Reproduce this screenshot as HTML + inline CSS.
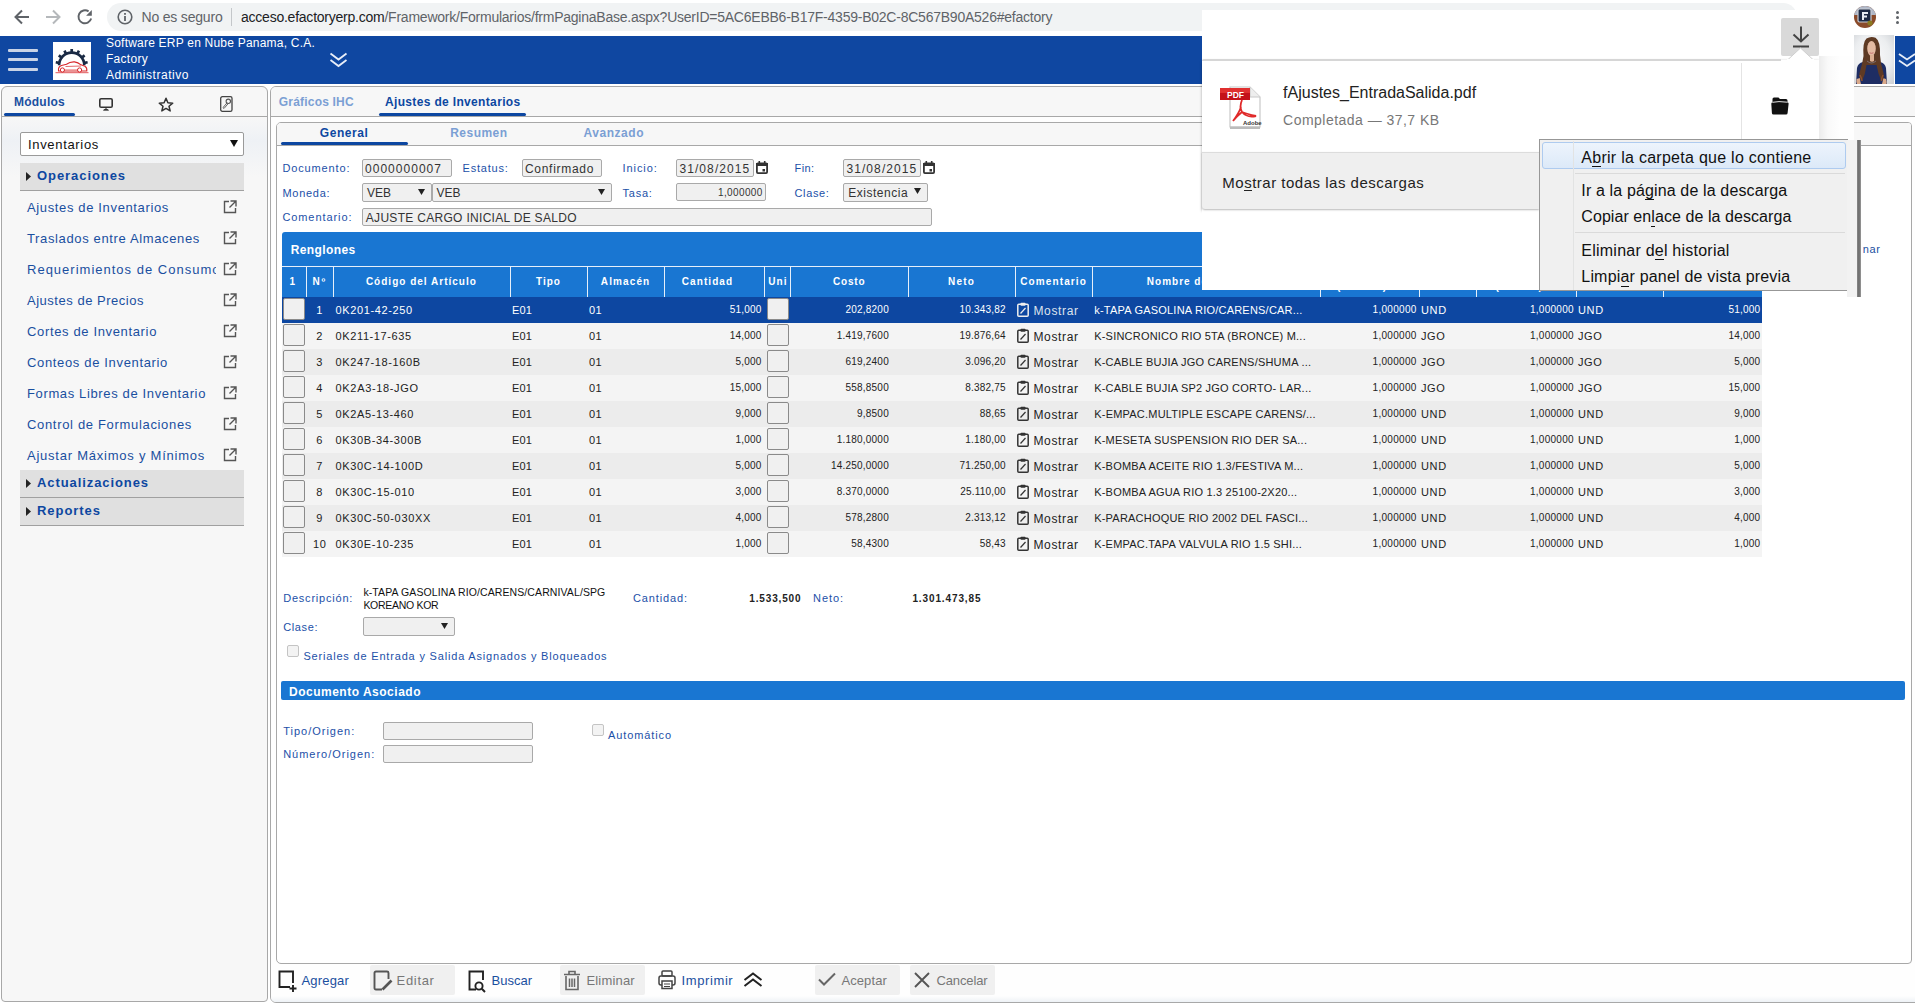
<!DOCTYPE html><html><head><meta charset="utf-8"><style>
html,body{margin:0;padding:0;width:1915px;height:1005px;overflow:hidden;background:#fff;font-family:"Liberation Sans",sans-serif;}
.t{position:absolute;white-space:nowrap;line-height:1;}
div{box-sizing:border-box;}
svg{position:absolute;overflow:visible;}
</style></head><body>
<div style="position:absolute;left:0px;top:0px;width:1915px;height:36px;background:#fff;"></div>
<div style="position:absolute;left:107px;top:3px;width:1690px;height:28px;background:#f1f3f4;border-radius:14px;"></div>
<svg style="left:12.5px;top:8px" width="18" height="18" viewBox="0 0 18 18"><path d="M16 9H3M9 2.5L2.5 9 9 15.5" fill="none" stroke="#5f6368" stroke-width="2"/></svg>
<svg style="left:44px;top:8px" width="18" height="18" viewBox="0 0 18 18"><path d="M2 9H15M9 2.5L15.5 9 9 15.5" fill="none" stroke="#b5b8bb" stroke-width="2"/></svg>
<svg style="left:76px;top:8px" width="18" height="18" viewBox="0 0 18 18"><path d="M15.2 10.6A6.5 6.5 0 1 1 12.6 3.4" fill="none" stroke="#5f6368" stroke-width="1.9"/><path d="M15.8 2.1V7.8H10.1Z" fill="#5f6368"/></svg>
<svg style="left:117px;top:8.5px" width="16" height="16" viewBox="0 0 16 16"><circle cx="8" cy="8" r="6.8" fill="none" stroke="#5f6368" stroke-width="1.6"/><rect x="7.1" y="7" width="1.8" height="5" fill="#5f6368"/><rect x="7.1" y="4" width="1.8" height="1.8" fill="#5f6368"/></svg>
<div class="t" style="left:141.50px;top:10.15px;font-size:14px;color:#5f6368;letter-spacing:-0.189px;">No es seguro</div>
<div style="position:absolute;left:231px;top:8px;width:1px;height:18px;background:#c4c7ca;"></div>
<div class="t" style="left:241px;top:10.15px;font-size:14px;color:#202124;letter-spacing:-0.235px;"><span style="color:#202124">acceso.efactoryerp.com</span><span style="color:#5f6368">/Framework/Formularios/frmPaginaBase.aspx?UserID=5AC6EBB6-B17F-4359-B02C-8C567B90A526#efactory</span></div>
<div style="position:absolute;left:0px;top:36px;width:1915px;height:48px;background:#0f47a1;"></div>
<div style="position:absolute;left:8px;top:49px;width:30px;height:3px;background:#c9d3e6;border-radius:1px;"></div>
<div style="position:absolute;left:8px;top:58px;width:30px;height:3px;background:#c9d3e6;border-radius:1px;"></div>
<div style="position:absolute;left:8px;top:68px;width:30px;height:3px;background:#c9d3e6;border-radius:1px;"></div>
<div style="position:absolute;left:53px;top:42px;width:38px;height:38px;background:#fff;"></div>
<svg style="left:53px;top:42px" width="38" height="38" viewBox="0 0 38 38">
<path d="M6.1 23.2 A12.6 12.6 0 0 1 31.299999999999997 23.2" fill="none" stroke="#1a2a44" stroke-width="2.6"/>
<g fill="#1a2a44"><rect x="17.35" y="7.00" width="2.7" height="4.5" transform="rotate(79.5 18.7 23.2)"/><rect x="17.35" y="7.00" width="2.7" height="4.5" transform="rotate(53.0 18.7 23.2)"/><rect x="17.35" y="7.00" width="2.7" height="4.5" transform="rotate(26.5 18.7 23.2)"/><rect x="17.35" y="7.00" width="2.7" height="4.5" transform="rotate(-0.0 18.7 23.2)"/><rect x="17.35" y="7.00" width="2.7" height="4.5" transform="rotate(-26.5 18.7 23.2)"/><rect x="17.35" y="7.00" width="2.7" height="4.5" transform="rotate(-53.0 18.7 23.2)"/><rect x="17.35" y="7.00" width="2.7" height="4.5" transform="rotate(-79.5 18.7 23.2)"/></g>
<path d="M5.5 29 Q5 24.5 8.5 23.5 L13.5 22.3 Q17 19.6 21.5 19.9 Q25 20.3 28 22.8 L32 24.2 Q34.2 25.5 33.8 29 Z" fill="#fff" stroke="#d8262a" stroke-width="1.1"/>
<path d="M12.5 24.5 L28 24" stroke="#d8262a" stroke-width="0.7"/>
<path d="M11 27.8 H25" stroke="#e88" stroke-width="0.9"/>
<circle cx="9.4" cy="28" r="2.1" fill="#fff" stroke="#d8262a" stroke-width="1"/><circle cx="26.6" cy="28" r="2.1" fill="#fff" stroke="#d8262a" stroke-width="1"/>
<path d="M2.5 30.7 H35.5" stroke="#d8262a" stroke-width="0.9" opacity="0.85"/>
</svg>
<div class="t" style="left:106.00px;top:37.34px;font-size:12px;color:#fff;letter-spacing:0.215px;">Software ERP en Nube Panama, C.A.</div>
<div class="t" style="left:106.00px;top:53.34px;font-size:12px;color:#fff;letter-spacing:0.284px;">Factory</div>
<div class="t" style="left:106.00px;top:69.34px;font-size:12px;color:#fff;letter-spacing:0.546px;">Administrativo</div>
<svg style="left:329px;top:52px" width="19" height="16" viewBox="0 0 19 16"><path d="M1.5 1.5L9.5 7.5 17.5 1.5M1.5 8L9.5 14 17.5 8" fill="none" stroke="#e8eef8" stroke-width="1.8"/></svg>
<div style="position:absolute;left:1px;top:86px;width:267px;height:916px;background:#f7f7f7;border:1px solid #a8a8a8;border-radius:6px 6px 4px 4px;"></div>
<div style="position:absolute;left:2px;top:117px;width:265px;height:60px;background:linear-gradient(#f7f7f7,#eef1f5 40%,#f7f7f7);"></div>
<div style="position:absolute;left:2px;top:116px;width:265px;height:1px;background:#a8a8a8;"></div>
<div class="t" style="left:14.00px;top:95.84px;font-size:12px;color:#1a4fa0;font-weight:bold;letter-spacing:0.239px;">Módulos</div>
<div style="position:absolute;left:4px;top:113px;width:71px;height:3px;background:#0d47a1;border-radius:2px;"></div>
<svg style="left:99px;top:97.5px" width="14" height="13" viewBox="0 0 14 13"><rect x="0.8" y="0.8" width="12.4" height="8.4" rx="1.3" fill="none" stroke="#333" stroke-width="1.6"/><path d="M4.5 12.2H9.5L7 10.6Z" fill="#333" stroke="#333" stroke-width="0.8"/></svg>
<svg style="left:158px;top:96.5px" width="16" height="15" viewBox="0 0 24 23"><path d="M12 2L14.9 8.9 22.3 9.4 16.6 14.2 18.4 21.4 12 17.5 5.6 21.4 7.4 14.2 1.7 9.4 9.1 8.9Z" fill="none" stroke="#333" stroke-width="2.3" stroke-linejoin="round"/></svg>
<svg style="left:220px;top:96px" width="13" height="16" viewBox="0 0 13 16"><rect x="0.7" y="0.7" width="11.3" height="14.6" rx="1.6" fill="none" stroke="#444" stroke-width="1.3"/><circle cx="8.3" cy="5.3" r="2.2" fill="none" stroke="#555" stroke-width="1.1"/><path d="M7 6.8L3 11.6 4 12.5 8 7.8" fill="none" stroke="#555" stroke-width="0.9"/></svg>
<div style="position:absolute;left:20px;top:132px;width:224px;height:24px;background:#fff;border:1px solid #9a9a9a;border-radius:2px;"></div>
<div class="t" style="left:28.00px;top:138.00px;font-size:13px;color:#111;letter-spacing:0.673px;">Inventarios</div>
<svg style="left:230px;top:140px" width="8" height="7" viewBox="0 0 8 7"><path d="M0 0H8L4 7Z" fill="#111"/></svg>
<div style="position:absolute;left:20px;top:163px;width:224px;height:28px;background:#e0e0e0;border-bottom:1px solid #a0a0a0;"></div>
<svg style="left:26px;top:172px" width="5" height="9" viewBox="0 0 5 9"><path d="M0 0L5 4.5 0 9Z" fill="#222"/></svg>
<div class="t" style="left:37.00px;top:169.00px;font-size:13px;color:#0d47a1;font-weight:bold;letter-spacing:0.931px;">Operaciones</div>
<div class="t" style="left:27.00px;top:201.00px;font-size:13px;color:#1a4fa0;letter-spacing:0.641px;">Ajustes de Inventarios</div>
<svg style="left:223px;top:200px" width="14" height="14" viewBox="0 0 14 14"><path d="M6 1.5H1.5V12.5H12.5V8" fill="none" stroke="#555" stroke-width="1.4"/><path d="M7.5 1H13V6.5M13 1L6.5 7.5" fill="none" stroke="#555" stroke-width="1.4"/></svg>
<div class="t" style="left:27.00px;top:232.00px;font-size:13px;color:#1a4fa0;letter-spacing:0.638px;">Traslados entre Almacenes</div>
<svg style="left:223px;top:231px" width="14" height="14" viewBox="0 0 14 14"><path d="M6 1.5H1.5V12.5H12.5V8" fill="none" stroke="#555" stroke-width="1.4"/><path d="M7.5 1H13V6.5M13 1L6.5 7.5" fill="none" stroke="#555" stroke-width="1.4"/></svg>
<div style="position:absolute;left:27px;top:260px;width:189px;height:18px;overflow:hidden;">
<div class="t" style="left:0.00px;top:3.00px;font-size:13px;color:#1a4fa0;letter-spacing:1.005px;">Requerimientos de Consumos</div>
</div>
<svg style="left:223px;top:262px" width="14" height="14" viewBox="0 0 14 14"><path d="M6 1.5H1.5V12.5H12.5V8" fill="none" stroke="#555" stroke-width="1.4"/><path d="M7.5 1H13V6.5M13 1L6.5 7.5" fill="none" stroke="#555" stroke-width="1.4"/></svg>
<div class="t" style="left:27.00px;top:294.00px;font-size:13px;color:#1a4fa0;letter-spacing:0.519px;">Ajustes de Precios</div>
<svg style="left:223px;top:293px" width="14" height="14" viewBox="0 0 14 14"><path d="M6 1.5H1.5V12.5H12.5V8" fill="none" stroke="#555" stroke-width="1.4"/><path d="M7.5 1H13V6.5M13 1L6.5 7.5" fill="none" stroke="#555" stroke-width="1.4"/></svg>
<div class="t" style="left:27.00px;top:325.00px;font-size:13px;color:#1a4fa0;letter-spacing:0.647px;">Cortes de Inventario</div>
<svg style="left:223px;top:324px" width="14" height="14" viewBox="0 0 14 14"><path d="M6 1.5H1.5V12.5H12.5V8" fill="none" stroke="#555" stroke-width="1.4"/><path d="M7.5 1H13V6.5M13 1L6.5 7.5" fill="none" stroke="#555" stroke-width="1.4"/></svg>
<div class="t" style="left:27.00px;top:356.00px;font-size:13px;color:#1a4fa0;letter-spacing:0.657px;">Conteos de Inventario</div>
<svg style="left:223px;top:355px" width="14" height="14" viewBox="0 0 14 14"><path d="M6 1.5H1.5V12.5H12.5V8" fill="none" stroke="#555" stroke-width="1.4"/><path d="M7.5 1H13V6.5M13 1L6.5 7.5" fill="none" stroke="#555" stroke-width="1.4"/></svg>
<div class="t" style="left:27.00px;top:387.00px;font-size:13px;color:#1a4fa0;letter-spacing:0.635px;">Formas Libres de Inventario</div>
<svg style="left:223px;top:386px" width="14" height="14" viewBox="0 0 14 14"><path d="M6 1.5H1.5V12.5H12.5V8" fill="none" stroke="#555" stroke-width="1.4"/><path d="M7.5 1H13V6.5M13 1L6.5 7.5" fill="none" stroke="#555" stroke-width="1.4"/></svg>
<div class="t" style="left:27.00px;top:418.00px;font-size:13px;color:#1a4fa0;letter-spacing:0.673px;">Control de Formulaciones</div>
<svg style="left:223px;top:417px" width="14" height="14" viewBox="0 0 14 14"><path d="M6 1.5H1.5V12.5H12.5V8" fill="none" stroke="#555" stroke-width="1.4"/><path d="M7.5 1H13V6.5M13 1L6.5 7.5" fill="none" stroke="#555" stroke-width="1.4"/></svg>
<div class="t" style="left:27.00px;top:449.00px;font-size:13px;color:#1a4fa0;letter-spacing:0.763px;">Ajustar Máximos y Mínimos</div>
<svg style="left:223px;top:448px" width="14" height="14" viewBox="0 0 14 14"><path d="M6 1.5H1.5V12.5H12.5V8" fill="none" stroke="#555" stroke-width="1.4"/><path d="M7.5 1H13V6.5M13 1L6.5 7.5" fill="none" stroke="#555" stroke-width="1.4"/></svg>
<div style="position:absolute;left:20px;top:470px;width:224px;height:28px;background:#e0e0e0;border-bottom:1px solid #a0a0a0;"></div>
<svg style="left:26px;top:479px" width="5" height="9" viewBox="0 0 5 9"><path d="M0 0L5 4.5 0 9Z" fill="#222"/></svg>
<div class="t" style="left:37.00px;top:476.00px;font-size:13px;color:#0d47a1;font-weight:bold;letter-spacing:0.916px;">Actualizaciones</div>
<div style="position:absolute;left:20px;top:498px;width:224px;height:28px;background:#e0e0e0;border-bottom:1px solid #a0a0a0;"></div>
<svg style="left:26px;top:507px" width="5" height="9" viewBox="0 0 5 9"><path d="M0 0L5 4.5 0 9Z" fill="#222"/></svg>
<div class="t" style="left:37.00px;top:504.00px;font-size:13px;color:#0d47a1;font-weight:bold;letter-spacing:0.956px;">Reportes</div>
<div style="position:absolute;left:270px;top:86px;width:1660px;height:917px;background:#fefefe;border:1px solid #a8a8a8;border-radius:6px;"></div>
<div style="position:absolute;left:271px;top:87px;width:1660px;height:29px;background:#f7f7f7;border-radius:5px 0 0 0;"></div>
<div style="position:absolute;left:271px;top:116px;width:1660px;height:1px;background:#a8a8a8;"></div>
<div class="t" style="left:278.80px;top:95.84px;font-size:12px;color:#7b9fd4;font-weight:bold;letter-spacing:0.193px;">Gráficos IHC</div>
<div class="t" style="left:385.00px;top:95.84px;font-size:12px;color:#0d47a1;font-weight:bold;letter-spacing:0.339px;">Ajustes de Inventarios</div>
<div style="position:absolute;left:379px;top:113px;width:147px;height:3px;background:#0d47a1;border-radius:2px;"></div>
<div style="position:absolute;left:276px;top:122px;width:1636px;height:842px;background:#fff;border:1px solid #a8a8a8;border-radius:5px 4px 4px 5px;"></div>
<div style="position:absolute;left:277px;top:123px;width:1634px;height:22px;background:#f7f7f7;border-radius:4px 3px 0 0;"></div>
<div style="position:absolute;left:277px;top:145px;width:1634px;height:1px;background:#a8a8a8;"></div>
<div class="t" style="left:319.80px;top:127.14px;font-size:12px;color:#0d47a1;font-weight:bold;letter-spacing:0.544px;">General</div>
<div style="position:absolute;left:281px;top:142px;width:127px;height:3px;background:#0d47a1;border-radius:2px;"></div>
<div class="t" style="left:450.20px;top:127.14px;font-size:12px;color:#7b9fd4;font-weight:bold;letter-spacing:0.483px;">Resumen</div>
<div class="t" style="left:583.60px;top:127.14px;font-size:12px;color:#7b9fd4;font-weight:bold;letter-spacing:0.521px;">Avanzado</div>
<div class="t" style="left:282.40px;top:162.69px;font-size:11px;color:#1c50a8;letter-spacing:0.869px;">Documento:</div>
<div style="position:absolute;left:362px;top:159px;width:90px;height:18px;background:#f0f0f0;border:1px solid #a9a9a9;border-radius:2px;"></div>
<div class="t" style="left:365.00px;top:162.84px;font-size:12px;color:#333;letter-spacing:1.026px;">0000000007</div>
<div class="t" style="left:462.60px;top:162.69px;font-size:11px;color:#1c50a8;letter-spacing:0.782px;">Estatus:</div>
<div style="position:absolute;left:522px;top:159px;width:80px;height:18px;background:#f0f0f0;border:1px solid #a9a9a9;border-radius:2px;"></div>
<div class="t" style="left:525.00px;top:162.84px;font-size:12px;color:#333;letter-spacing:0.697px;">Confirmado</div>
<div class="t" style="left:622.60px;top:162.69px;font-size:11px;color:#1c50a8;letter-spacing:0.895px;">Inicio:</div>
<div style="position:absolute;left:676px;top:159px;width:78px;height:18px;background:#f0f0f0;border:1px solid #a9a9a9;border-radius:2px;"></div>
<div class="t" style="left:679.40px;top:162.84px;font-size:12px;color:#333;letter-spacing:1.094px;">31/08/2015</div>
<svg style="left:756px;top:161px" width="12" height="13" viewBox="0 0 12 13"><rect x="0.9" y="2.4" width="10.2" height="9.7" rx="1" fill="none" stroke="#333" stroke-width="1.8"/><rect x="0" y="2" width="12" height="3" fill="#333"/><rect x="2.5" y="0" width="1.6" height="3" fill="#333"/><rect x="7.9" y="0" width="1.6" height="3" fill="#333"/><rect x="6.5" y="8" width="2.5" height="2.5" fill="#333"/></svg>
<div class="t" style="left:794.50px;top:162.69px;font-size:11px;color:#1c50a8;letter-spacing:0.416px;">Fin:</div>
<div style="position:absolute;left:843px;top:159px;width:78px;height:18px;background:#f0f0f0;border:1px solid #a9a9a9;border-radius:2px;"></div>
<div class="t" style="left:846.40px;top:162.84px;font-size:12px;color:#333;letter-spacing:1.094px;">31/08/2015</div>
<svg style="left:923px;top:161px" width="12" height="13" viewBox="0 0 12 13"><rect x="0.9" y="2.4" width="10.2" height="9.7" rx="1" fill="none" stroke="#333" stroke-width="1.8"/><rect x="0" y="2" width="12" height="3" fill="#333"/><rect x="2.5" y="0" width="1.6" height="3" fill="#333"/><rect x="7.9" y="0" width="1.6" height="3" fill="#333"/><rect x="6.5" y="8" width="2.5" height="2.5" fill="#333"/></svg>
<div class="t" style="left:282.40px;top:187.69px;font-size:11px;color:#1c50a8;letter-spacing:0.742px;">Moneda:</div>
<div style="position:absolute;left:362px;top:183px;width:70px;height:19px;background:#f0f0f0;border:1px solid #a9a9a9;border-radius:2px;"></div>
<div class="t" style="left:366.90px;top:187.34px;font-size:12px;color:#333;letter-spacing:-0.004px;">VEB</div>
<svg style="left:417.5px;top:188.5px" width="7" height="6" viewBox="0 0 7 6"><path d="M0 0H7L3.5 6Z" fill="#222"/></svg>
<div style="position:absolute;left:432px;top:183px;width:180px;height:19px;background:#f0f0f0;border:1px solid #a9a9a9;border-radius:2px;"></div>
<div class="t" style="left:436.50px;top:187.34px;font-size:12px;color:#333;letter-spacing:-0.004px;">VEB</div>
<svg style="left:597.5px;top:188.5px" width="7" height="6" viewBox="0 0 7 6"><path d="M0 0H7L3.5 6Z" fill="#222"/></svg>
<div class="t" style="left:622.60px;top:187.69px;font-size:11px;color:#1c50a8;letter-spacing:0.742px;">Tasa:</div>
<div style="position:absolute;left:676px;top:183px;width:90px;height:18px;background:#f0f0f0;border:1px solid #a9a9a9;border-radius:2px;"></div>
<div class="t" style="right:1152.34px;top:188.03px;font-size:10px;color:#333;letter-spacing:0.361px;">1,000000</div>
<div class="t" style="left:794.50px;top:187.69px;font-size:11px;color:#1c50a8;letter-spacing:0.637px;">Clase:</div>
<div style="position:absolute;left:843px;top:183px;width:85px;height:19px;background:#f0f0f0;border:1px solid #a9a9a9;border-radius:2px;"></div>
<div class="t" style="left:848.20px;top:187.34px;font-size:12px;color:#333;letter-spacing:0.531px;">Existencia</div>
<svg style="left:913.5px;top:187.5px" width="7" height="6" viewBox="0 0 7 6"><path d="M0 0H7L3.5 6Z" fill="#222"/></svg>
<div class="t" style="left:282.40px;top:211.69px;font-size:11px;color:#1c50a8;letter-spacing:0.917px;">Comentario:</div>
<div style="position:absolute;left:362px;top:208px;width:570px;height:18px;background:#f0f0f0;border:1px solid #a9a9a9;border-radius:2px;"></div>
<div class="t" style="left:365.80px;top:211.84px;font-size:12px;color:#333;letter-spacing:0.301px;">AJUSTE CARGO INICIAL DE SALDO</div>
<div style="position:absolute;left:282px;top:232px;width:1480px;height:34px;background:#1976d2;border-radius:3px 3px 0 0;"></div>
<div class="t" style="left:290.70px;top:243.84px;font-size:12px;color:#fff;font-weight:bold;letter-spacing:0.406px;">Renglones</div>
<div style="position:absolute;left:282px;top:266px;width:1480px;height:31px;background:#1976d2;border-top:1px solid #e6effa;"></div>
<div style="position:absolute;left:306px;top:267px;width:1px;height:30px;background:#e6effa;"></div>
<div style="position:absolute;left:333px;top:267px;width:1px;height:30px;background:#e6effa;"></div>
<div style="position:absolute;left:510px;top:267px;width:1px;height:30px;background:#e6effa;"></div>
<div style="position:absolute;left:587px;top:267px;width:1px;height:30px;background:#e6effa;"></div>
<div style="position:absolute;left:664px;top:267px;width:1px;height:30px;background:#e6effa;"></div>
<div style="position:absolute;left:764px;top:267px;width:1px;height:30px;background:#e6effa;"></div>
<div style="position:absolute;left:790px;top:267px;width:1px;height:30px;background:#e6effa;"></div>
<div style="position:absolute;left:908px;top:267px;width:1px;height:30px;background:#e6effa;"></div>
<div style="position:absolute;left:1015px;top:267px;width:1px;height:30px;background:#e6effa;"></div>
<div style="position:absolute;left:1092px;top:267px;width:1px;height:30px;background:#e6effa;"></div>
<div style="position:absolute;left:1320px;top:267px;width:1px;height:30px;background:#e6effa;"></div>
<div style="position:absolute;left:1419px;top:267px;width:1px;height:30px;background:#e6effa;"></div>
<div style="position:absolute;left:1476px;top:267px;width:1px;height:30px;background:#e6effa;"></div>
<div style="position:absolute;left:1576px;top:267px;width:1px;height:30px;background:#e6effa;"></div>
<div style="position:absolute;left:1663px;top:267px;width:1px;height:30px;background:#e6effa;"></div>
<div class="t" style="left:1337.00px;top:281.74px;font-size:10px;color:#fff;font-weight:bold;letter-spacing:-0.044px;">(Cantidad)</div>
<div class="t" style="left:1495.50px;top:281.74px;font-size:10px;color:#fff;font-weight:bold;letter-spacing:-0.344px;">(Cantidad)</div>
<div class="t" style="left:289.60px;top:276.54px;font-size:10px;color:#fff;font-weight:bold;letter-spacing:1.112px;">1</div>
<div class="t" style="left:312.60px;top:276.54px;font-size:10px;color:#fff;font-weight:bold;letter-spacing:1.563px;">Nº</div>
<div class="t" style="left:365.90px;top:276.54px;font-size:10px;color:#fff;font-weight:bold;letter-spacing:1.008px;">Código del Artículo</div>
<div class="t" style="left:536.00px;top:276.54px;font-size:10px;color:#fff;font-weight:bold;letter-spacing:1.019px;">Tipo</div>
<div class="t" style="left:600.80px;top:276.54px;font-size:10px;color:#fff;font-weight:bold;letter-spacing:1.116px;">Almacén</div>
<div class="t" style="left:681.80px;top:276.54px;font-size:10px;color:#fff;font-weight:bold;letter-spacing:1.078px;">Cantidad</div>
<div class="t" style="left:768.20px;top:276.54px;font-size:10px;color:#fff;font-weight:bold;letter-spacing:1.164px;">Uni</div>
<div class="t" style="left:833.00px;top:276.54px;font-size:10px;color:#fff;font-weight:bold;letter-spacing:0.794px;">Costo</div>
<div class="t" style="left:948.00px;top:276.54px;font-size:10px;color:#fff;font-weight:bold;letter-spacing:1.194px;">Neto</div>
<div class="t" style="left:1020.20px;top:276.54px;font-size:10px;color:#fff;font-weight:bold;letter-spacing:1.124px;">Comentario</div>
<div class="t" style="left:1146.80px;top:276.54px;font-size:10px;color:#fff;font-weight:bold;letter-spacing:1.002px;">Nombre del Artículo</div>
<div class="t" style="left:1430.00px;top:276.54px;font-size:10px;color:#fff;font-weight:bold;letter-spacing:1.130px;">Unidad</div>
<div class="t" style="left:1595.00px;top:276.54px;font-size:10px;color:#fff;font-weight:bold;letter-spacing:1.130px;">Unidad</div>
<div class="t" style="left:1680.00px;top:276.54px;font-size:10px;color:#fff;font-weight:bold;letter-spacing:1.028px;">Cant. Unidad</div>
<div style="position:absolute;left:282px;top:297px;width:1480px;height:26px;background:#0d47a1;"></div>
<div style="position:absolute;left:283px;top:298px;width:22px;height:22px;background:#f0f0f0;border:1px solid #8a8a8a;border-radius:2px;"></div>
<div style="position:absolute;left:767px;top:298px;width:22px;height:22px;background:#f0f0f0;border:1px solid #8a8a8a;border-radius:2px;"></div>
<div class="t" style="left:316.37px;top:304.69px;font-size:11px;color:#fff;letter-spacing:0.734px;">1</div>
<div class="t" style="left:335.60px;top:304.69px;font-size:11px;color:#fff;letter-spacing:0.610px;">0K201-42-250</div>
<div class="t" style="left:512.00px;top:304.69px;font-size:11px;color:#fff;letter-spacing:0.209px;">E01</div>
<div class="t" style="left:589.00px;top:304.69px;font-size:11px;color:#fff;letter-spacing:0.332px;">01</div>
<div class="t" style="right:1153.40px;top:305.04px;font-size:10px;color:#fff;letter-spacing:0.204px;">51,000</div>
<div class="t" style="right:1026.09px;top:305.04px;font-size:10px;color:#fff;letter-spacing:0.209px;">202,8200</div>
<div class="t" style="right:909.20px;top:305.04px;font-size:10px;color:#fff;letter-spacing:0.198px;">10.343,82</div>
<svg style="left:1017px;top:302px" width="12" height="15" viewBox="0 0 12 15"><rect x="0.8" y="2.3" width="10.4" height="11.9" rx="1" fill="none" stroke="#eee" stroke-width="1.5"/><rect x="3.5" y="0.8" width="5" height="3" rx="0.8" fill="#eee"/><path d="M3.5 11.5L8.5 6" stroke="#eee" stroke-width="1.2"/></svg>
<div class="t" style="left:1033.40px;top:305.34px;font-size:12px;color:#dde3ee;letter-spacing:0.661px;">Mostrar</div>
<div class="t" style="left:1094.20px;top:304.69px;font-size:11px;color:#fff;letter-spacing:0.214px;">k-TAPA GASOLINA RIO/CARENS/CAR...</div>
<div class="t" style="right:498.41px;top:305.04px;font-size:10px;color:#fff;letter-spacing:0.286px;">1,000000</div>
<div class="t" style="left:1421.00px;top:304.69px;font-size:11px;color:#fff;letter-spacing:0.636px;">UND</div>
<div class="t" style="right:341.11px;top:305.04px;font-size:10px;color:#fff;letter-spacing:0.286px;">1,000000</div>
<div class="t" style="left:1578.00px;top:304.69px;font-size:11px;color:#fff;letter-spacing:0.636px;">UND</div>
<div class="t" style="right:154.80px;top:305.04px;font-size:10px;color:#fff;letter-spacing:0.204px;">51,000</div>
<div style="position:absolute;left:282px;top:323px;width:1480px;height:26px;background:#f4f4f4;"></div>
<div style="position:absolute;left:283px;top:324px;width:22px;height:22px;background:#f0f0f0;border:1px solid #8a8a8a;border-radius:2px;"></div>
<div style="position:absolute;left:767px;top:324px;width:22px;height:22px;background:#f0f0f0;border:1px solid #8a8a8a;border-radius:2px;"></div>
<div class="t" style="left:316.37px;top:330.69px;font-size:11px;color:#222;letter-spacing:0.734px;">2</div>
<div class="t" style="left:335.60px;top:330.69px;font-size:11px;color:#222;letter-spacing:0.603px;">0K211-17-635</div>
<div class="t" style="left:512.00px;top:330.69px;font-size:11px;color:#222;letter-spacing:0.209px;">E01</div>
<div class="t" style="left:589.00px;top:330.69px;font-size:11px;color:#222;letter-spacing:0.332px;">01</div>
<div class="t" style="right:1153.40px;top:331.04px;font-size:10px;color:#222;letter-spacing:0.204px;">14,000</div>
<div class="t" style="right:1026.10px;top:331.04px;font-size:10px;color:#222;letter-spacing:0.200px;">1.419,7600</div>
<div class="t" style="right:909.20px;top:331.04px;font-size:10px;color:#222;letter-spacing:0.198px;">19.876,64</div>
<svg style="left:1017px;top:328px" width="12" height="15" viewBox="0 0 12 15"><rect x="0.8" y="2.3" width="10.4" height="11.9" rx="1" fill="none" stroke="#333" stroke-width="1.5"/><rect x="3.5" y="0.8" width="5" height="3" rx="0.8" fill="#333"/><path d="M3.5 11.5L8.5 6" stroke="#333" stroke-width="1.2"/></svg>
<div class="t" style="left:1033.40px;top:331.34px;font-size:12px;color:#222;letter-spacing:0.661px;">Mostrar</div>
<div class="t" style="left:1094.20px;top:330.69px;font-size:11px;color:#222;letter-spacing:0.211px;">K-SINCRONICO RIO 5TA (BRONCE) M...</div>
<div class="t" style="right:498.41px;top:331.04px;font-size:10px;color:#222;letter-spacing:0.286px;">1,000000</div>
<div class="t" style="left:1421.00px;top:330.69px;font-size:11px;color:#222;letter-spacing:0.603px;">JGO</div>
<div class="t" style="right:341.11px;top:331.04px;font-size:10px;color:#222;letter-spacing:0.286px;">1,000000</div>
<div class="t" style="left:1578.00px;top:330.69px;font-size:11px;color:#222;letter-spacing:0.603px;">JGO</div>
<div class="t" style="right:154.80px;top:331.04px;font-size:10px;color:#222;letter-spacing:0.204px;">14,000</div>
<div style="position:absolute;left:282px;top:349px;width:1480px;height:26px;background:#ececec;"></div>
<div style="position:absolute;left:283px;top:350px;width:22px;height:22px;background:#f0f0f0;border:1px solid #8a8a8a;border-radius:2px;"></div>
<div style="position:absolute;left:767px;top:350px;width:22px;height:22px;background:#f0f0f0;border:1px solid #8a8a8a;border-radius:2px;"></div>
<div class="t" style="left:316.37px;top:356.69px;font-size:11px;color:#222;letter-spacing:0.734px;">3</div>
<div class="t" style="left:335.60px;top:356.69px;font-size:11px;color:#222;letter-spacing:0.622px;">0K247-18-160B</div>
<div class="t" style="left:512.00px;top:356.69px;font-size:11px;color:#222;letter-spacing:0.209px;">E01</div>
<div class="t" style="left:589.00px;top:356.69px;font-size:11px;color:#222;letter-spacing:0.332px;">01</div>
<div class="t" style="right:1153.40px;top:357.04px;font-size:10px;color:#222;letter-spacing:0.200px;">5,000</div>
<div class="t" style="right:1026.09px;top:357.04px;font-size:10px;color:#222;letter-spacing:0.209px;">619,2400</div>
<div class="t" style="right:909.21px;top:357.04px;font-size:10px;color:#222;letter-spacing:0.195px;">3.096,20</div>
<svg style="left:1017px;top:354px" width="12" height="15" viewBox="0 0 12 15"><rect x="0.8" y="2.3" width="10.4" height="11.9" rx="1" fill="none" stroke="#333" stroke-width="1.5"/><rect x="3.5" y="0.8" width="5" height="3" rx="0.8" fill="#333"/><path d="M3.5 11.5L8.5 6" stroke="#333" stroke-width="1.2"/></svg>
<div class="t" style="left:1033.40px;top:357.34px;font-size:12px;color:#222;letter-spacing:0.661px;">Mostrar</div>
<div class="t" style="left:1094.20px;top:356.69px;font-size:11px;color:#222;letter-spacing:0.216px;">K-CABLE BUJIA JGO CARENS/SHUMA ...</div>
<div class="t" style="right:498.41px;top:357.04px;font-size:10px;color:#222;letter-spacing:0.286px;">1,000000</div>
<div class="t" style="left:1421.00px;top:356.69px;font-size:11px;color:#222;letter-spacing:0.603px;">JGO</div>
<div class="t" style="right:341.11px;top:357.04px;font-size:10px;color:#222;letter-spacing:0.286px;">1,000000</div>
<div class="t" style="left:1578.00px;top:356.69px;font-size:11px;color:#222;letter-spacing:0.603px;">JGO</div>
<div class="t" style="right:154.80px;top:357.04px;font-size:10px;color:#222;letter-spacing:0.200px;">5,000</div>
<div style="position:absolute;left:282px;top:375px;width:1480px;height:26px;background:#f4f4f4;"></div>
<div style="position:absolute;left:283px;top:376px;width:22px;height:22px;background:#f0f0f0;border:1px solid #8a8a8a;border-radius:2px;"></div>
<div style="position:absolute;left:767px;top:376px;width:22px;height:22px;background:#f0f0f0;border:1px solid #8a8a8a;border-radius:2px;"></div>
<div class="t" style="left:316.37px;top:382.69px;font-size:11px;color:#222;letter-spacing:0.734px;">4</div>
<div class="t" style="left:335.60px;top:382.69px;font-size:11px;color:#222;letter-spacing:0.658px;">0K2A3-18-JGO</div>
<div class="t" style="left:512.00px;top:382.69px;font-size:11px;color:#222;letter-spacing:0.209px;">E01</div>
<div class="t" style="left:589.00px;top:382.69px;font-size:11px;color:#222;letter-spacing:0.332px;">01</div>
<div class="t" style="right:1153.40px;top:383.04px;font-size:10px;color:#222;letter-spacing:0.204px;">15,000</div>
<div class="t" style="right:1026.09px;top:383.04px;font-size:10px;color:#222;letter-spacing:0.209px;">558,8500</div>
<div class="t" style="right:909.21px;top:383.04px;font-size:10px;color:#222;letter-spacing:0.195px;">8.382,75</div>
<svg style="left:1017px;top:380px" width="12" height="15" viewBox="0 0 12 15"><rect x="0.8" y="2.3" width="10.4" height="11.9" rx="1" fill="none" stroke="#333" stroke-width="1.5"/><rect x="3.5" y="0.8" width="5" height="3" rx="0.8" fill="#333"/><path d="M3.5 11.5L8.5 6" stroke="#333" stroke-width="1.2"/></svg>
<div class="t" style="left:1033.40px;top:383.34px;font-size:12px;color:#222;letter-spacing:0.661px;">Mostrar</div>
<div class="t" style="left:1094.20px;top:382.69px;font-size:11px;color:#222;letter-spacing:0.210px;">K-CABLE BUJIA SP2 JGO CORTO- LAR...</div>
<div class="t" style="right:498.41px;top:383.04px;font-size:10px;color:#222;letter-spacing:0.286px;">1,000000</div>
<div class="t" style="left:1421.00px;top:382.69px;font-size:11px;color:#222;letter-spacing:0.603px;">JGO</div>
<div class="t" style="right:341.11px;top:383.04px;font-size:10px;color:#222;letter-spacing:0.286px;">1,000000</div>
<div class="t" style="left:1578.00px;top:382.69px;font-size:11px;color:#222;letter-spacing:0.603px;">JGO</div>
<div class="t" style="right:154.80px;top:383.04px;font-size:10px;color:#222;letter-spacing:0.204px;">15,000</div>
<div style="position:absolute;left:282px;top:401px;width:1480px;height:26px;background:#ececec;"></div>
<div style="position:absolute;left:283px;top:402px;width:22px;height:22px;background:#f0f0f0;border:1px solid #8a8a8a;border-radius:2px;"></div>
<div style="position:absolute;left:767px;top:402px;width:22px;height:22px;background:#f0f0f0;border:1px solid #8a8a8a;border-radius:2px;"></div>
<div class="t" style="left:316.37px;top:408.69px;font-size:11px;color:#222;letter-spacing:0.734px;">5</div>
<div class="t" style="left:335.60px;top:408.69px;font-size:11px;color:#222;letter-spacing:0.621px;">0K2A5-13-460</div>
<div class="t" style="left:512.00px;top:408.69px;font-size:11px;color:#222;letter-spacing:0.209px;">E01</div>
<div class="t" style="left:589.00px;top:408.69px;font-size:11px;color:#222;letter-spacing:0.332px;">01</div>
<div class="t" style="right:1153.40px;top:409.04px;font-size:10px;color:#222;letter-spacing:0.200px;">9,000</div>
<div class="t" style="right:1026.10px;top:409.04px;font-size:10px;color:#222;letter-spacing:0.204px;">9,8500</div>
<div class="t" style="right:909.20px;top:409.04px;font-size:10px;color:#222;letter-spacing:0.200px;">88,65</div>
<svg style="left:1017px;top:406px" width="12" height="15" viewBox="0 0 12 15"><rect x="0.8" y="2.3" width="10.4" height="11.9" rx="1" fill="none" stroke="#333" stroke-width="1.5"/><rect x="3.5" y="0.8" width="5" height="3" rx="0.8" fill="#333"/><path d="M3.5 11.5L8.5 6" stroke="#333" stroke-width="1.2"/></svg>
<div class="t" style="left:1033.40px;top:409.34px;font-size:12px;color:#222;letter-spacing:0.661px;">Mostrar</div>
<div class="t" style="left:1094.20px;top:408.69px;font-size:11px;color:#222;letter-spacing:0.220px;">K-EMPAC.MULTIPLE ESCAPE CARENS/...</div>
<div class="t" style="right:498.41px;top:409.04px;font-size:10px;color:#222;letter-spacing:0.286px;">1,000000</div>
<div class="t" style="left:1421.00px;top:408.69px;font-size:11px;color:#222;letter-spacing:0.636px;">UND</div>
<div class="t" style="right:341.11px;top:409.04px;font-size:10px;color:#222;letter-spacing:0.286px;">1,000000</div>
<div class="t" style="left:1578.00px;top:408.69px;font-size:11px;color:#222;letter-spacing:0.636px;">UND</div>
<div class="t" style="right:154.80px;top:409.04px;font-size:10px;color:#222;letter-spacing:0.200px;">9,000</div>
<div style="position:absolute;left:282px;top:427px;width:1480px;height:26px;background:#f4f4f4;"></div>
<div style="position:absolute;left:283px;top:428px;width:22px;height:22px;background:#f0f0f0;border:1px solid #8a8a8a;border-radius:2px;"></div>
<div style="position:absolute;left:767px;top:428px;width:22px;height:22px;background:#f0f0f0;border:1px solid #8a8a8a;border-radius:2px;"></div>
<div class="t" style="left:316.37px;top:434.69px;font-size:11px;color:#222;letter-spacing:0.734px;">6</div>
<div class="t" style="left:335.60px;top:434.69px;font-size:11px;color:#222;letter-spacing:0.632px;">0K30B-34-300B</div>
<div class="t" style="left:512.00px;top:434.69px;font-size:11px;color:#222;letter-spacing:0.209px;">E01</div>
<div class="t" style="left:589.00px;top:434.69px;font-size:11px;color:#222;letter-spacing:0.332px;">01</div>
<div class="t" style="right:1153.40px;top:435.04px;font-size:10px;color:#222;letter-spacing:0.200px;">1,000</div>
<div class="t" style="right:1026.10px;top:435.04px;font-size:10px;color:#222;letter-spacing:0.200px;">1.180,0000</div>
<div class="t" style="right:909.21px;top:435.04px;font-size:10px;color:#222;letter-spacing:0.195px;">1.180,00</div>
<svg style="left:1017px;top:432px" width="12" height="15" viewBox="0 0 12 15"><rect x="0.8" y="2.3" width="10.4" height="11.9" rx="1" fill="none" stroke="#333" stroke-width="1.5"/><rect x="3.5" y="0.8" width="5" height="3" rx="0.8" fill="#333"/><path d="M3.5 11.5L8.5 6" stroke="#333" stroke-width="1.2"/></svg>
<div class="t" style="left:1033.40px;top:435.34px;font-size:12px;color:#222;letter-spacing:0.661px;">Mostrar</div>
<div class="t" style="left:1094.20px;top:434.69px;font-size:11px;color:#222;letter-spacing:0.218px;">K-MESETA SUSPENSION RIO DER SA...</div>
<div class="t" style="right:498.41px;top:435.04px;font-size:10px;color:#222;letter-spacing:0.286px;">1,000000</div>
<div class="t" style="left:1421.00px;top:434.69px;font-size:11px;color:#222;letter-spacing:0.636px;">UND</div>
<div class="t" style="right:341.11px;top:435.04px;font-size:10px;color:#222;letter-spacing:0.286px;">1,000000</div>
<div class="t" style="left:1578.00px;top:434.69px;font-size:11px;color:#222;letter-spacing:0.636px;">UND</div>
<div class="t" style="right:154.80px;top:435.04px;font-size:10px;color:#222;letter-spacing:0.200px;">1,000</div>
<div style="position:absolute;left:282px;top:453px;width:1480px;height:26px;background:#ececec;"></div>
<div style="position:absolute;left:283px;top:454px;width:22px;height:22px;background:#f0f0f0;border:1px solid #8a8a8a;border-radius:2px;"></div>
<div style="position:absolute;left:767px;top:454px;width:22px;height:22px;background:#f0f0f0;border:1px solid #8a8a8a;border-radius:2px;"></div>
<div class="t" style="left:316.37px;top:460.69px;font-size:11px;color:#222;letter-spacing:0.734px;">7</div>
<div class="t" style="left:335.60px;top:460.69px;font-size:11px;color:#222;letter-spacing:0.642px;">0K30C-14-100D</div>
<div class="t" style="left:512.00px;top:460.69px;font-size:11px;color:#222;letter-spacing:0.209px;">E01</div>
<div class="t" style="left:589.00px;top:460.69px;font-size:11px;color:#222;letter-spacing:0.332px;">01</div>
<div class="t" style="right:1153.40px;top:461.04px;font-size:10px;color:#222;letter-spacing:0.200px;">5,000</div>
<div class="t" style="right:1026.10px;top:461.04px;font-size:10px;color:#222;letter-spacing:0.202px;">14.250,0000</div>
<div class="t" style="right:909.20px;top:461.04px;font-size:10px;color:#222;letter-spacing:0.198px;">71.250,00</div>
<svg style="left:1017px;top:458px" width="12" height="15" viewBox="0 0 12 15"><rect x="0.8" y="2.3" width="10.4" height="11.9" rx="1" fill="none" stroke="#333" stroke-width="1.5"/><rect x="3.5" y="0.8" width="5" height="3" rx="0.8" fill="#333"/><path d="M3.5 11.5L8.5 6" stroke="#333" stroke-width="1.2"/></svg>
<div class="t" style="left:1033.40px;top:461.34px;font-size:12px;color:#222;letter-spacing:0.661px;">Mostrar</div>
<div class="t" style="left:1094.20px;top:460.69px;font-size:11px;color:#222;letter-spacing:0.202px;">K-BOMBA ACEITE RIO 1.3/FESTIVA M...</div>
<div class="t" style="right:498.41px;top:461.04px;font-size:10px;color:#222;letter-spacing:0.286px;">1,000000</div>
<div class="t" style="left:1421.00px;top:460.69px;font-size:11px;color:#222;letter-spacing:0.636px;">UND</div>
<div class="t" style="right:341.11px;top:461.04px;font-size:10px;color:#222;letter-spacing:0.286px;">1,000000</div>
<div class="t" style="left:1578.00px;top:460.69px;font-size:11px;color:#222;letter-spacing:0.636px;">UND</div>
<div class="t" style="right:154.80px;top:461.04px;font-size:10px;color:#222;letter-spacing:0.200px;">5,000</div>
<div style="position:absolute;left:282px;top:479px;width:1480px;height:26px;background:#f4f4f4;"></div>
<div style="position:absolute;left:283px;top:480px;width:22px;height:22px;background:#f0f0f0;border:1px solid #8a8a8a;border-radius:2px;"></div>
<div style="position:absolute;left:767px;top:480px;width:22px;height:22px;background:#f0f0f0;border:1px solid #8a8a8a;border-radius:2px;"></div>
<div class="t" style="left:316.37px;top:486.69px;font-size:11px;color:#222;letter-spacing:0.734px;">8</div>
<div class="t" style="left:335.60px;top:486.69px;font-size:11px;color:#222;letter-spacing:0.626px;">0K30C-15-010</div>
<div class="t" style="left:512.00px;top:486.69px;font-size:11px;color:#222;letter-spacing:0.209px;">E01</div>
<div class="t" style="left:589.00px;top:486.69px;font-size:11px;color:#222;letter-spacing:0.332px;">01</div>
<div class="t" style="right:1153.40px;top:487.04px;font-size:10px;color:#222;letter-spacing:0.200px;">3,000</div>
<div class="t" style="right:1026.10px;top:487.04px;font-size:10px;color:#222;letter-spacing:0.200px;">8.370,0000</div>
<div class="t" style="right:909.21px;top:487.04px;font-size:10px;color:#222;letter-spacing:0.194px;">25.110,00</div>
<svg style="left:1017px;top:484px" width="12" height="15" viewBox="0 0 12 15"><rect x="0.8" y="2.3" width="10.4" height="11.9" rx="1" fill="none" stroke="#333" stroke-width="1.5"/><rect x="3.5" y="0.8" width="5" height="3" rx="0.8" fill="#333"/><path d="M3.5 11.5L8.5 6" stroke="#333" stroke-width="1.2"/></svg>
<div class="t" style="left:1033.40px;top:487.34px;font-size:12px;color:#222;letter-spacing:0.661px;">Mostrar</div>
<div class="t" style="left:1094.20px;top:486.69px;font-size:11px;color:#222;letter-spacing:0.202px;">K-BOMBA AGUA RIO 1.3 25100-2X20...</div>
<div class="t" style="right:498.41px;top:487.04px;font-size:10px;color:#222;letter-spacing:0.286px;">1,000000</div>
<div class="t" style="left:1421.00px;top:486.69px;font-size:11px;color:#222;letter-spacing:0.636px;">UND</div>
<div class="t" style="right:341.11px;top:487.04px;font-size:10px;color:#222;letter-spacing:0.286px;">1,000000</div>
<div class="t" style="left:1578.00px;top:486.69px;font-size:11px;color:#222;letter-spacing:0.636px;">UND</div>
<div class="t" style="right:154.80px;top:487.04px;font-size:10px;color:#222;letter-spacing:0.200px;">3,000</div>
<div style="position:absolute;left:282px;top:505px;width:1480px;height:26px;background:#ececec;"></div>
<div style="position:absolute;left:283px;top:506px;width:22px;height:22px;background:#f0f0f0;border:1px solid #8a8a8a;border-radius:2px;"></div>
<div style="position:absolute;left:767px;top:506px;width:22px;height:22px;background:#f0f0f0;border:1px solid #8a8a8a;border-radius:2px;"></div>
<div class="t" style="left:316.37px;top:512.69px;font-size:11px;color:#222;letter-spacing:0.734px;">9</div>
<div class="t" style="left:335.60px;top:512.69px;font-size:11px;color:#222;letter-spacing:0.647px;">0K30C-50-030XX</div>
<div class="t" style="left:512.00px;top:512.69px;font-size:11px;color:#222;letter-spacing:0.209px;">E01</div>
<div class="t" style="left:589.00px;top:512.69px;font-size:11px;color:#222;letter-spacing:0.332px;">01</div>
<div class="t" style="right:1153.40px;top:513.03px;font-size:10px;color:#222;letter-spacing:0.200px;">4,000</div>
<div class="t" style="right:1026.09px;top:513.03px;font-size:10px;color:#222;letter-spacing:0.209px;">578,2800</div>
<div class="t" style="right:909.21px;top:513.03px;font-size:10px;color:#222;letter-spacing:0.195px;">2.313,12</div>
<svg style="left:1017px;top:510px" width="12" height="15" viewBox="0 0 12 15"><rect x="0.8" y="2.3" width="10.4" height="11.9" rx="1" fill="none" stroke="#333" stroke-width="1.5"/><rect x="3.5" y="0.8" width="5" height="3" rx="0.8" fill="#333"/><path d="M3.5 11.5L8.5 6" stroke="#333" stroke-width="1.2"/></svg>
<div class="t" style="left:1033.40px;top:513.34px;font-size:12px;color:#222;letter-spacing:0.661px;">Mostrar</div>
<div class="t" style="left:1094.20px;top:512.69px;font-size:11px;color:#222;letter-spacing:0.213px;">K-PARACHOQUE RIO 2002 DEL FASCI...</div>
<div class="t" style="right:498.41px;top:513.03px;font-size:10px;color:#222;letter-spacing:0.286px;">1,000000</div>
<div class="t" style="left:1421.00px;top:512.69px;font-size:11px;color:#222;letter-spacing:0.636px;">UND</div>
<div class="t" style="right:341.11px;top:513.03px;font-size:10px;color:#222;letter-spacing:0.286px;">1,000000</div>
<div class="t" style="left:1578.00px;top:512.69px;font-size:11px;color:#222;letter-spacing:0.636px;">UND</div>
<div class="t" style="right:154.80px;top:513.03px;font-size:10px;color:#222;letter-spacing:0.200px;">4,000</div>
<div style="position:absolute;left:282px;top:531px;width:1480px;height:26px;background:#f4f4f4;"></div>
<div style="position:absolute;left:283px;top:532px;width:22px;height:22px;background:#f0f0f0;border:1px solid #8a8a8a;border-radius:2px;"></div>
<div style="position:absolute;left:767px;top:532px;width:22px;height:22px;background:#f0f0f0;border:1px solid #8a8a8a;border-radius:2px;"></div>
<div class="t" style="left:312.95px;top:538.69px;font-size:11px;color:#222;letter-spacing:0.734px;">10</div>
<div class="t" style="left:335.60px;top:538.69px;font-size:11px;color:#222;letter-spacing:0.621px;">0K30E-10-235</div>
<div class="t" style="left:512.00px;top:538.69px;font-size:11px;color:#222;letter-spacing:0.209px;">E01</div>
<div class="t" style="left:589.00px;top:538.69px;font-size:11px;color:#222;letter-spacing:0.332px;">01</div>
<div class="t" style="right:1153.40px;top:539.03px;font-size:10px;color:#222;letter-spacing:0.200px;">1,000</div>
<div class="t" style="right:1026.09px;top:539.03px;font-size:10px;color:#222;letter-spacing:0.207px;">58,4300</div>
<div class="t" style="right:909.20px;top:539.03px;font-size:10px;color:#222;letter-spacing:0.200px;">58,43</div>
<svg style="left:1017px;top:536px" width="12" height="15" viewBox="0 0 12 15"><rect x="0.8" y="2.3" width="10.4" height="11.9" rx="1" fill="none" stroke="#333" stroke-width="1.5"/><rect x="3.5" y="0.8" width="5" height="3" rx="0.8" fill="#333"/><path d="M3.5 11.5L8.5 6" stroke="#333" stroke-width="1.2"/></svg>
<div class="t" style="left:1033.40px;top:539.34px;font-size:12px;color:#222;letter-spacing:0.661px;">Mostrar</div>
<div class="t" style="left:1094.20px;top:538.69px;font-size:11px;color:#222;letter-spacing:0.201px;">K-EMPAC.TAPA VALVULA RIO 1.5 SHI...</div>
<div class="t" style="right:498.41px;top:539.03px;font-size:10px;color:#222;letter-spacing:0.286px;">1,000000</div>
<div class="t" style="left:1421.00px;top:538.69px;font-size:11px;color:#222;letter-spacing:0.636px;">UND</div>
<div class="t" style="right:341.11px;top:539.03px;font-size:10px;color:#222;letter-spacing:0.286px;">1,000000</div>
<div class="t" style="left:1578.00px;top:538.69px;font-size:11px;color:#222;letter-spacing:0.636px;">UND</div>
<div class="t" style="right:154.80px;top:539.03px;font-size:10px;color:#222;letter-spacing:0.200px;">1,000</div>
<div class="t" style="left:283.20px;top:592.69px;font-size:11px;color:#1c50a8;letter-spacing:0.790px;">Descripción:</div>
<div class="t" style="left:363.40px;top:586.61px;font-size:10.5px;color:#111;letter-spacing:0.101px;">k-TAPA GASOLINA RIO/CARENS/CARNIVAL/SPG</div>
<div class="t" style="left:363.40px;top:599.61px;font-size:10.5px;color:#111;letter-spacing:-0.289px;">KOREANO KOR</div>
<div class="t" style="left:633.00px;top:592.69px;font-size:11px;color:#1c50a8;letter-spacing:0.879px;">Cantidad:</div>
<div class="t" style="right:1113.67px;top:593.53px;font-size:10px;color:#222;font-weight:bold;letter-spacing:0.835px;">1.533,500</div>
<div class="t" style="left:813.00px;top:592.69px;font-size:11px;color:#1c50a8;letter-spacing:0.942px;">Neto:</div>
<div class="t" style="right:933.62px;top:593.53px;font-size:10px;color:#222;font-weight:bold;letter-spacing:0.884px;">1.301.473,85</div>
<div class="t" style="left:283.20px;top:621.69px;font-size:11px;color:#1c50a8;letter-spacing:0.637px;">Clase:</div>
<div style="position:absolute;left:363px;top:617px;width:92px;height:19px;background:#f0f0f0;border:1px solid #a9a9a9;border-radius:2px;"></div>
<svg style="left:440.5px;top:622.5px" width="7" height="6" viewBox="0 0 7 6"><path d="M0 0H7L3.5 6Z" fill="#222"/></svg>
<div style="position:absolute;left:287px;top:645px;width:12px;height:12px;background:#f3f3f3;border:1px solid #c4c4c4;border-radius:2px;"></div>
<div class="t" style="left:303.40px;top:650.69px;font-size:11px;color:#1c50a8;letter-spacing:0.817px;">Seriales de Entrada y Salida Asignados y Bloqueados</div>
<div style="position:absolute;left:281px;top:681px;width:1624px;height:19px;background:#1976d2;border-radius:2px;"></div>
<div class="t" style="left:289.00px;top:685.84px;font-size:12px;color:#fff;font-weight:bold;letter-spacing:0.505px;">Documento Asociado</div>
<div class="t" style="left:283.20px;top:725.69px;font-size:11px;color:#1c50a8;letter-spacing:0.990px;">Tipo/Origen:</div>
<div style="position:absolute;left:383px;top:722px;width:150px;height:18px;background:#f0f0f0;border:1px solid #a9a9a9;border-radius:2px;"></div>
<div class="t" style="left:283.20px;top:748.69px;font-size:11px;color:#1c50a8;letter-spacing:0.982px;">Número/Origen:</div>
<div style="position:absolute;left:383px;top:745px;width:150px;height:18px;background:#f0f0f0;border:1px solid #a9a9a9;border-radius:2px;"></div>
<div style="position:absolute;left:592px;top:724px;width:12px;height:12px;background:#f3f3f3;border:1px solid #c4c4c4;border-radius:2px;"></div>
<div class="t" style="left:608.00px;top:729.69px;font-size:11px;color:#1c50a8;letter-spacing:0.897px;">Automático</div>
<div style="position:absolute;left:271px;top:996px;width:1660px;height:6px;background:linear-gradient(#fefefe,#eef2f6);border-radius:0 0 0 5px;"></div>
<div style="position:absolute;left:370px;top:965px;width:85px;height:30px;background:#f0f0f0;border-radius:2px;"></div>
<div style="position:absolute;left:560px;top:965px;width:85px;height:30px;background:#f0f0f0;border-radius:2px;"></div>
<div style="position:absolute;left:815px;top:965px;width:85px;height:30px;background:#f0f0f0;border-radius:2px;"></div>
<div style="position:absolute;left:910px;top:965px;width:85px;height:30px;background:#f0f0f0;border-radius:2px;"></div>
<svg style="left:278px;top:970px" width="20" height="23" viewBox="0 0 20 23"><path d="M12 17H1.5V1.5H15V13" fill="none" stroke="#222" stroke-width="1.9"/><path d="M15 15V22M11.5 18.5H18.5" stroke="#222" stroke-width="1.9"/></svg>
<div class="t" style="left:301.50px;top:973.70px;font-size:13px;color:#1a4fa0;letter-spacing:0.178px;">Agregar</div>
<svg style="left:373px;top:970px" width="21" height="22" viewBox="0 0 21 22"><path d="M9 19.5H3Q1.5 19.5 1.5 18V3Q1.5 1.5 3 1.5H14Q15.5 1.5 15.5 3V9" fill="none" stroke="#555" stroke-width="1.9"/><path d="M9.5 19.5L18.5 10.5" stroke="#555" stroke-width="2.6"/></svg>
<div class="t" style="left:396.60px;top:973.70px;font-size:13px;color:#777;letter-spacing:0.673px;">Editar</div>
<svg style="left:468px;top:970px" width="19" height="23" viewBox="0 0 19 23"><path d="M8 19.5H1.5V1.5H15V10" fill="none" stroke="#222" stroke-width="1.9"/><circle cx="11" cy="16" r="3.6" fill="none" stroke="#222" stroke-width="1.9"/><path d="M13.8 18.8L17 22" stroke="#222" stroke-width="2"/></svg>
<div class="t" style="left:491.50px;top:973.70px;font-size:13px;color:#1a4fa0;letter-spacing:0.006px;">Buscar</div>
<svg style="left:563px;top:970px" width="18" height="21" viewBox="0 0 18 21"><path d="M1 4.5H17M6 4V1.5H12V4" fill="none" stroke="#666" stroke-width="1.6"/><path d="M3 6V19.5H15V6" fill="none" stroke="#666" stroke-width="1.6"/><path d="M6.5 8.5V17M9 8.5V17M11.5 8.5V17" stroke="#666" stroke-width="1.5"/></svg>
<div class="t" style="left:586.40px;top:973.70px;font-size:13px;color:#777;letter-spacing:0.193px;">Eliminar</div>
<svg style="left:658px;top:970px" width="18" height="20" viewBox="0 0 18 20"><rect x="4" y="1" width="10" height="5" rx="1" fill="none" stroke="#444" stroke-width="1.5"/><rect x="1" y="6" width="16" height="9" rx="2" fill="none" stroke="#444" stroke-width="1.5"/><rect x="4" y="11" width="10" height="7.5" fill="#fff" stroke="#444" stroke-width="1.5"/><path d="M6 14H12M6 16.5H12" stroke="#444" stroke-width="1"/></svg>
<div class="t" style="left:681.60px;top:973.70px;font-size:13px;color:#1a4fa0;letter-spacing:0.595px;">Imprimir</div>
<svg style="left:743px;top:972px" width="20" height="15" viewBox="0 0 20 15"><path d="M1.5 8L10 1.5 18.5 8M1.5 14L10 7.5 18.5 14" fill="none" stroke="#222" stroke-width="2"/></svg>
<svg style="left:818px;top:972px" width="18" height="14" viewBox="0 0 18 14"><path d="M1 7.5L6 12.5 17 1.5" fill="none" stroke="#666" stroke-width="2"/></svg>
<div class="t" style="left:841.40px;top:973.70px;font-size:13px;color:#777;letter-spacing:0.100px;">Aceptar</div>
<svg style="left:914px;top:972px" width="16" height="16" viewBox="0 0 16 16"><path d="M1 1L15 15M15 1L1 15" fill="none" stroke="#555" stroke-width="1.9"/></svg>
<div class="t" style="left:936.50px;top:973.70px;font-size:13px;color:#777;letter-spacing:-0.128px;">Cancelar</div>
<svg style="left:1854px;top:35px" width="40" height="49" viewBox="0 0 40 49">
<defs><radialGradient id="bgw" cx="0.45" cy="0.45" r="0.75"><stop offset="0" stop-color="#fbfbfc"/><stop offset="0.6" stop-color="#eceef0"/><stop offset="1" stop-color="#cfd2d6"/></radialGradient></defs>
<rect width="40" height="49" fill="url(#bgw)"/>
<path d="M2 49 L3 33 Q4 28 9 27 L14 25.5 Q17.5 27 21 25.5 L26 27 Q31 28 32 33 L33 49Z" fill="#1e2d63"/>
<path d="M2.5 44 Q2 47 3 49 H7 Q6 46 6 43Z M32 44 Q33 47 32.5 49 H28 Q29 46 29 43Z" fill="#d9a98a"/>
<path d="M9.5 21 Q8.5 7 12.5 3.5 Q17 0.8 21.5 2.8 Q26.5 6 26 20 Q26.5 29 29.5 38 Q31 44 27.5 46 Q24 39 22.5 30 L12.5 30 Q11.5 39 8 46 Q4.5 44 5.5 38 Q8.5 29 9.5 21Z" fill="#5e3a24"/><path d="M6 40 Q8 44 8 46 M29 40 Q27 44 27.5 46" stroke="#8a5230" stroke-width="1.5" fill="none"/>
<ellipse cx="17.5" cy="13.5" rx="4.3" ry="7.5" fill="#e4bba3"/>
<path d="M16 20 H20 V26 Q18 27.5 16 26Z" fill="#ddb093"/>
<path d="M15.5 17.8 Q17.5 18.8 19.5 17.8" stroke="#c46a6a" stroke-width="0.9" fill="none"/>
<path d="M13 26 Q17.5 30 22 26" stroke="#9aa0b8" stroke-width="0.5" fill="none"/>
</svg>
<div style="position:absolute;left:1894px;top:36px;width:1px;height:48px;background:#fff;"></div>
<div style="position:absolute;left:1895px;top:36px;width:20px;height:48px;background:#0f47a1;"></div>
<svg style="left:1897px;top:52px" width="18" height="16" viewBox="0 0 16 16"><path d="M1 2L9 7.5 17 2M1 8.5L9 14 17 8.5" fill="none" stroke="#e8eef8" stroke-width="1.8"/></svg>
<div class="t" style="left:1862.70px;top:244.49px;font-size:11px;color:#1a4fa0;letter-spacing:0.700px;">nar</div>
<svg style="left:1854px;top:6px" width="22" height="22" viewBox="0 0 22 22">
<defs><clipPath id="cav"><circle cx="11" cy="11" r="11"/></clipPath></defs>
<g clip-path="url(#cav)"><rect width="22" height="22" fill="#8a4a2a"/><rect x="0" y="0" width="22" height="9" fill="#b0b8c8"/>
<rect x="4" y="3" width="13" height="13" rx="1.5" fill="#1e2a44" stroke="#c8ccd4" stroke-width="1.2"/>
<path d="M8 6H14V8H10V9.5H13V11.5H10V14H8Z" fill="#e8ecf2"/><circle cx="16" cy="17" r="2.6" fill="#8a7a20"/></g></svg>
<div style="position:absolute;left:1895.5px;top:10.5px;width:3px;height:3px;background:#5f6368;border-radius:50%;"></div>
<div style="position:absolute;left:1895.5px;top:15.5px;width:3px;height:3px;background:#5f6368;border-radius:50%;"></div>
<div style="position:absolute;left:1895.5px;top:20.5px;width:3px;height:3px;background:#5f6368;border-radius:50%;"></div>
<div style="position:absolute;left:1202px;top:10px;width:652px;height:50px;background:#fff;"></div>
<div style="position:absolute;left:1781px;top:18px;width:38px;height:38px;background:#d9d9d9;border-radius:2px;"></div>
<svg style="left:1792px;top:26px" width="18" height="22" viewBox="0 0 18 22"><path d="M9 0.5V15M1.5 8.5L9 15.5 16.5 8.5M1 20.5H17" fill="none" stroke="#444" stroke-width="2"/></svg>
<div style="position:absolute;left:1202px;top:60px;width:617px;height:150px;box-shadow:0 1px 3px rgba(0,0,0,0.35);border-radius:3px 0 0 0;"></div>
<div style="position:absolute;left:1202px;top:60px;width:617px;height:93px;background:#fff;"></div>
<div style="position:absolute;left:1202px;top:59px;width:579px;height:2px;background:#d6d6d6;border-radius:3px 0 0 0;"></div>
<svg style="left:1787px;top:47px" width="27" height="14" viewBox="0 0 27 14"><path d="M0 13.5L13.5 1 27 13.5Z" fill="#fff" stroke="#d0d0d0" stroke-width="1"/><rect x="0" y="12" width="27" height="3" fill="#fff"/></svg>
<div style="position:absolute;left:1741px;top:63px;width:1px;height:76px;background:#e4e4e4;"></div>
<div style="position:absolute;left:1819px;top:56px;width:35px;height:84px;background:linear-gradient(90deg,#ececec,#f9f9f9 25%,#fefefe 60%);"></div>
<svg style="left:1220px;top:85px" width="42" height="44" viewBox="0 0 42 44">
<path d="M10 2H30L40 12V42H10Z" fill="#fff" stroke="#c8c8c8" stroke-width="1.2"/>
<path d="M30 2V12H40" fill="#eee" stroke="#c8c8c8" stroke-width="1"/>
<rect x="10" y="41.5" width="30" height="2.5" fill="#bbb"/>
<rect x="0" y="3" width="30" height="12" fill="#c4121a"/><rect x="0" y="3" width="30" height="5" fill="#e03030"/>
<text x="7" y="13" font-family="Liberation Sans" font-weight="bold" font-size="8.5" fill="#fff">PDF</text>
<path d="M22 15 Q19 22 22 27 Q27 33 36 31 Q27 29 22 27 Q17 31 13 36 Q19 28 21 22" fill="none" stroke="#e02a2a" stroke-width="1.8"/>
<text x="23" y="40" font-family="Liberation Sans" font-weight="bold" font-size="6" fill="#333">Adobe</text>
</svg>
<div class="t" style="left:1283.10px;top:85.46px;font-size:16px;color:#222;letter-spacing:-0.001px;">fAjustes_EntradaSalida.pdf</div>
<div class="t" style="left:1283.10px;top:113.45px;font-size:14px;color:#777;letter-spacing:0.471px;">Completada — 37,7 KB</div>
<svg style="left:1771px;top:97px" width="18" height="18" viewBox="0 0 18 18"><path d="M1.5 2Q1.5 0.5 3 0.5H7.5L9 2H15Q16.5 2 16.5 3.5V6H1.5Z" fill="#111"/><path d="M0.3 6.8Q0.3 5.6 1.5 5.6H16.5Q17.7 5.6 17.6 6.8L16.6 16Q16.5 17.5 15 17.5H2.5Q1 17.5 0.9 16Z" fill="#111"/><path d="M1.5 5.3L8 4.6 16.5 5.2" stroke="#fff" stroke-width="0.9" fill="none"/></svg>
<div style="position:absolute;left:1202px;top:209px;width:617px;height:81px;background:#fff;"></div>
<div style="position:absolute;left:1202px;top:152px;width:337px;height:57px;background:#efefef;border-top:1px solid #dcdcdc;border-radius:0 0 0 3px;box-shadow:0 1px 2px rgba(0,0,0,0.28);"></div>
<div class="t" style="left:1222.30px;top:174.70px;font-size:15px;color:#222;letter-spacing:0.503px;">Mostrar todas las descargas</div>
<div style="position:absolute;left:1244.1px;top:190.4px;width:7.5px;height:1px;background:#222;"></div>
<div style="position:absolute;left:1819px;top:140px;width:33px;height:0px;"></div>
<div style="position:absolute;left:1539px;top:139px;width:309px;height:152px;background:#f0f0f0;border:1px solid #979797;"></div>
<div style="position:absolute;left:1847px;top:140px;width:11px;height:157px;background:#f2f2f2;"></div>
<div style="position:absolute;left:1857px;top:140px;width:4px;height:157px;background:linear-gradient(90deg,#8a8a8a,#6a6a6a,#9a9a9a);"></div>
<div style="position:absolute;left:1542px;top:142px;width:304px;height:27px;background:linear-gradient(#edf4fc,#dce9f8);border:1px solid #aecbef;border-radius:3px;"></div>
<div style="position:absolute;left:1573px;top:141px;width:1px;height:149px;background:#e2e3e3;"></div>
<div style="position:absolute;left:1575px;top:173px;width:270px;height:1px;background:#dadada;"></div>
<div style="position:absolute;left:1575px;top:232px;width:270px;height:1px;background:#dadada;"></div>
<div class="t" style="left:1581.30px;top:149.66px;font-size:16px;color:#111;letter-spacing:0.273px;">Abrir la carpeta que lo contiene</div>
<div style="position:absolute;left:1592.2px;top:166.2px;width:8.9px;height:1px;background:#111;"></div>
<div class="t" style="left:1581.30px;top:182.76px;font-size:16px;color:#111;letter-spacing:0.141px;">Ir a la página de la descarga</div>
<div style="position:absolute;left:1645.0px;top:199.3px;width:8.9px;height:1px;background:#111;"></div>
<div class="t" style="left:1581.30px;top:209.36px;font-size:16px;color:#111;letter-spacing:0.070px;">Copiar enlace de la descarga</div>
<div style="position:absolute;left:1651.3px;top:225.9px;width:3.6px;height:1px;background:#111;"></div>
<div class="t" style="left:1581.30px;top:242.76px;font-size:16px;color:#111;letter-spacing:0.233px;">Eliminar del historial</div>
<div style="position:absolute;left:1654.8px;top:259.3px;width:8.9px;height:1px;background:#111;"></div>
<div class="t" style="left:1581.30px;top:269.26px;font-size:16px;color:#111;letter-spacing:0.187px;">Limpiar panel de vista previa</div>
<div style="position:absolute;left:1620.5px;top:285.8px;width:8.9px;height:1px;background:#111;"></div>
</body></html>
